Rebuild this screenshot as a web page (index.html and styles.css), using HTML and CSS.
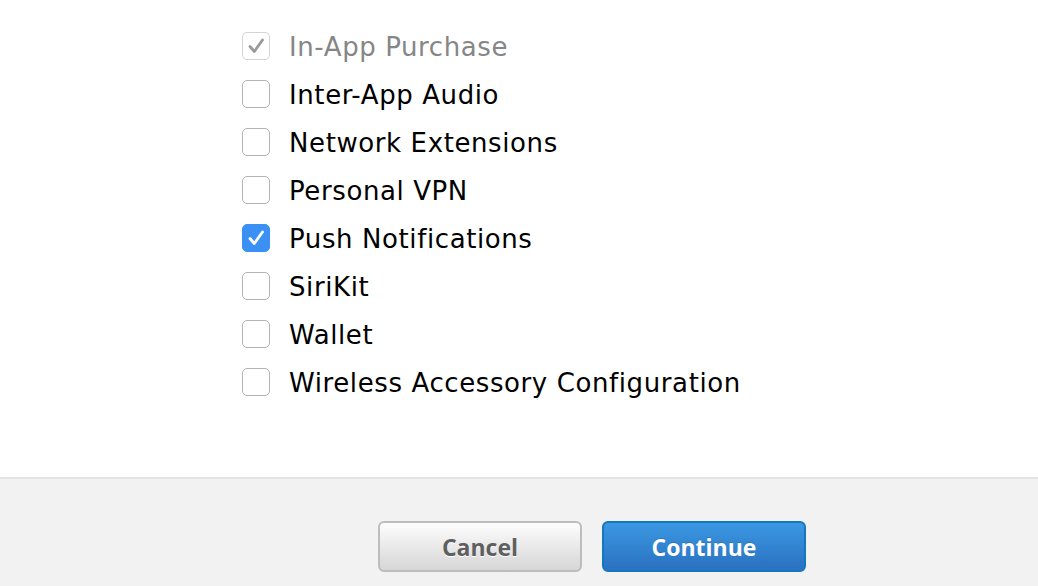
FILE: index.html
```html
<!DOCTYPE html>
<html>
<head>
<meta charset="utf-8">
<link rel="stylesheet" href="styles.css">
</head>
<body>
<div class="content">
  <ul class="list">
    <li class="row disabled"><span class="box checked-grey"><svg viewBox="0 0 28 28"><path d="M8 14.5 L12.3 19.5 L20.5 8" /></svg></span><span class="label">In-App Purchase</span></li>
    <li class="row"><span class="box"></span><span class="label">Inter-App Audio</span></li>
    <li class="row"><span class="box"></span><span class="label">Network Extensions</span></li>
    <li class="row"><span class="box"></span><span class="label">Personal VPN</span></li>
    <li class="row"><span class="box checked"><svg viewBox="0 0 28 28"><path d="M8 14.5 L12.3 19.5 L20.5 8" /></svg></span><span class="label">Push Notifications</span></li>
    <li class="row"><span class="box"></span><span class="label">SiriKit</span></li>
    <li class="row"><span class="box"></span><span class="label">Wallet</span></li>
    <li class="row"><span class="box"></span><span class="label">Wireless Accessory Configuration</span></li>
  </ul>
</div>
<div class="footer">
  <button class="btn cancel">Cancel</button>
  <button class="btn primary">Continue</button>
</div>
</body>
</html>
```
FILE: styles.css
```css
html, body {
  margin: 0;
  padding: 0;
  background: #fff;
  overflow: hidden;
}
body {
  width: 1038px;
  height: 586px;
  font-family: "DejaVu Sans", "Liberation Sans", sans-serif;
}
.content {
  height: 477px;
  background: #fff;
  box-sizing: border-box;
  padding-top: 22px;
}
.list {
  list-style: none;
  margin: 0;
  padding: 0 0 0 242px;
}
.row {
  height: 48px;
  display: flex;
  align-items: center;
  gap: 19px;
}
.box {
  width: 28px;
  height: 28px;
  box-sizing: border-box;
  border: 1px solid #b4b4b4;
  border-radius: 5px;
  background: #fff;
  display: flex;
  align-items: center;
  justify-content: center;
  flex: none;
}
.box svg {
  width: 28px;
  height: 28px;
  flex: none;
}
.box svg path {
  fill: none;
  stroke-width: 2.8;
  stroke-linecap: round;
  stroke-linejoin: round;
}
.box.checked {
  background: #3b91f3;
  border-color: #3b91f3;
}
.box.checked svg path {
  stroke: #fff;
}
.box.checked-grey {
  border-color: #d4d4d4;
}
.box.checked-grey svg path {
  stroke: #9a9a9a;
}
.label {
  font-size: 26px;
  letter-spacing: 0.6px;
  color: #000;
  line-height: 1;
  padding-top: 1px;
}
.disabled .label {
  color: #868686;
}
.footer {
  height: 109px;
  border-top: 2px solid #e2e2e2;
  background: #f2f2f2;
  box-sizing: border-box;
  padding: 42px 0 0 378px;
  display: flex;
  gap: 20px;
  align-items: flex-start;
}
.btn {
  width: 204px;
  height: 51px;
  border-radius: 6px;
  font-family: "Open Sans", "Liberation Sans", sans-serif;
  font-weight: 700;
  font-size: 23px;
  padding: 0;
  margin: 0;
  cursor: pointer;
}
.cancel {
  border: 2px solid #bdbdbd;
  background: linear-gradient(#fdfdfd, #d6d6d6);
  color: #5f5f5f;
  text-shadow: 0 1px 0 #fff;
}
.primary {
  border: 2px solid #1478c0;
  background: linear-gradient(#3b98e2, #2a71c0);
  color: #fff;
  text-shadow: 0 -1px 0 rgba(0,0,0,0.15);
}
```
